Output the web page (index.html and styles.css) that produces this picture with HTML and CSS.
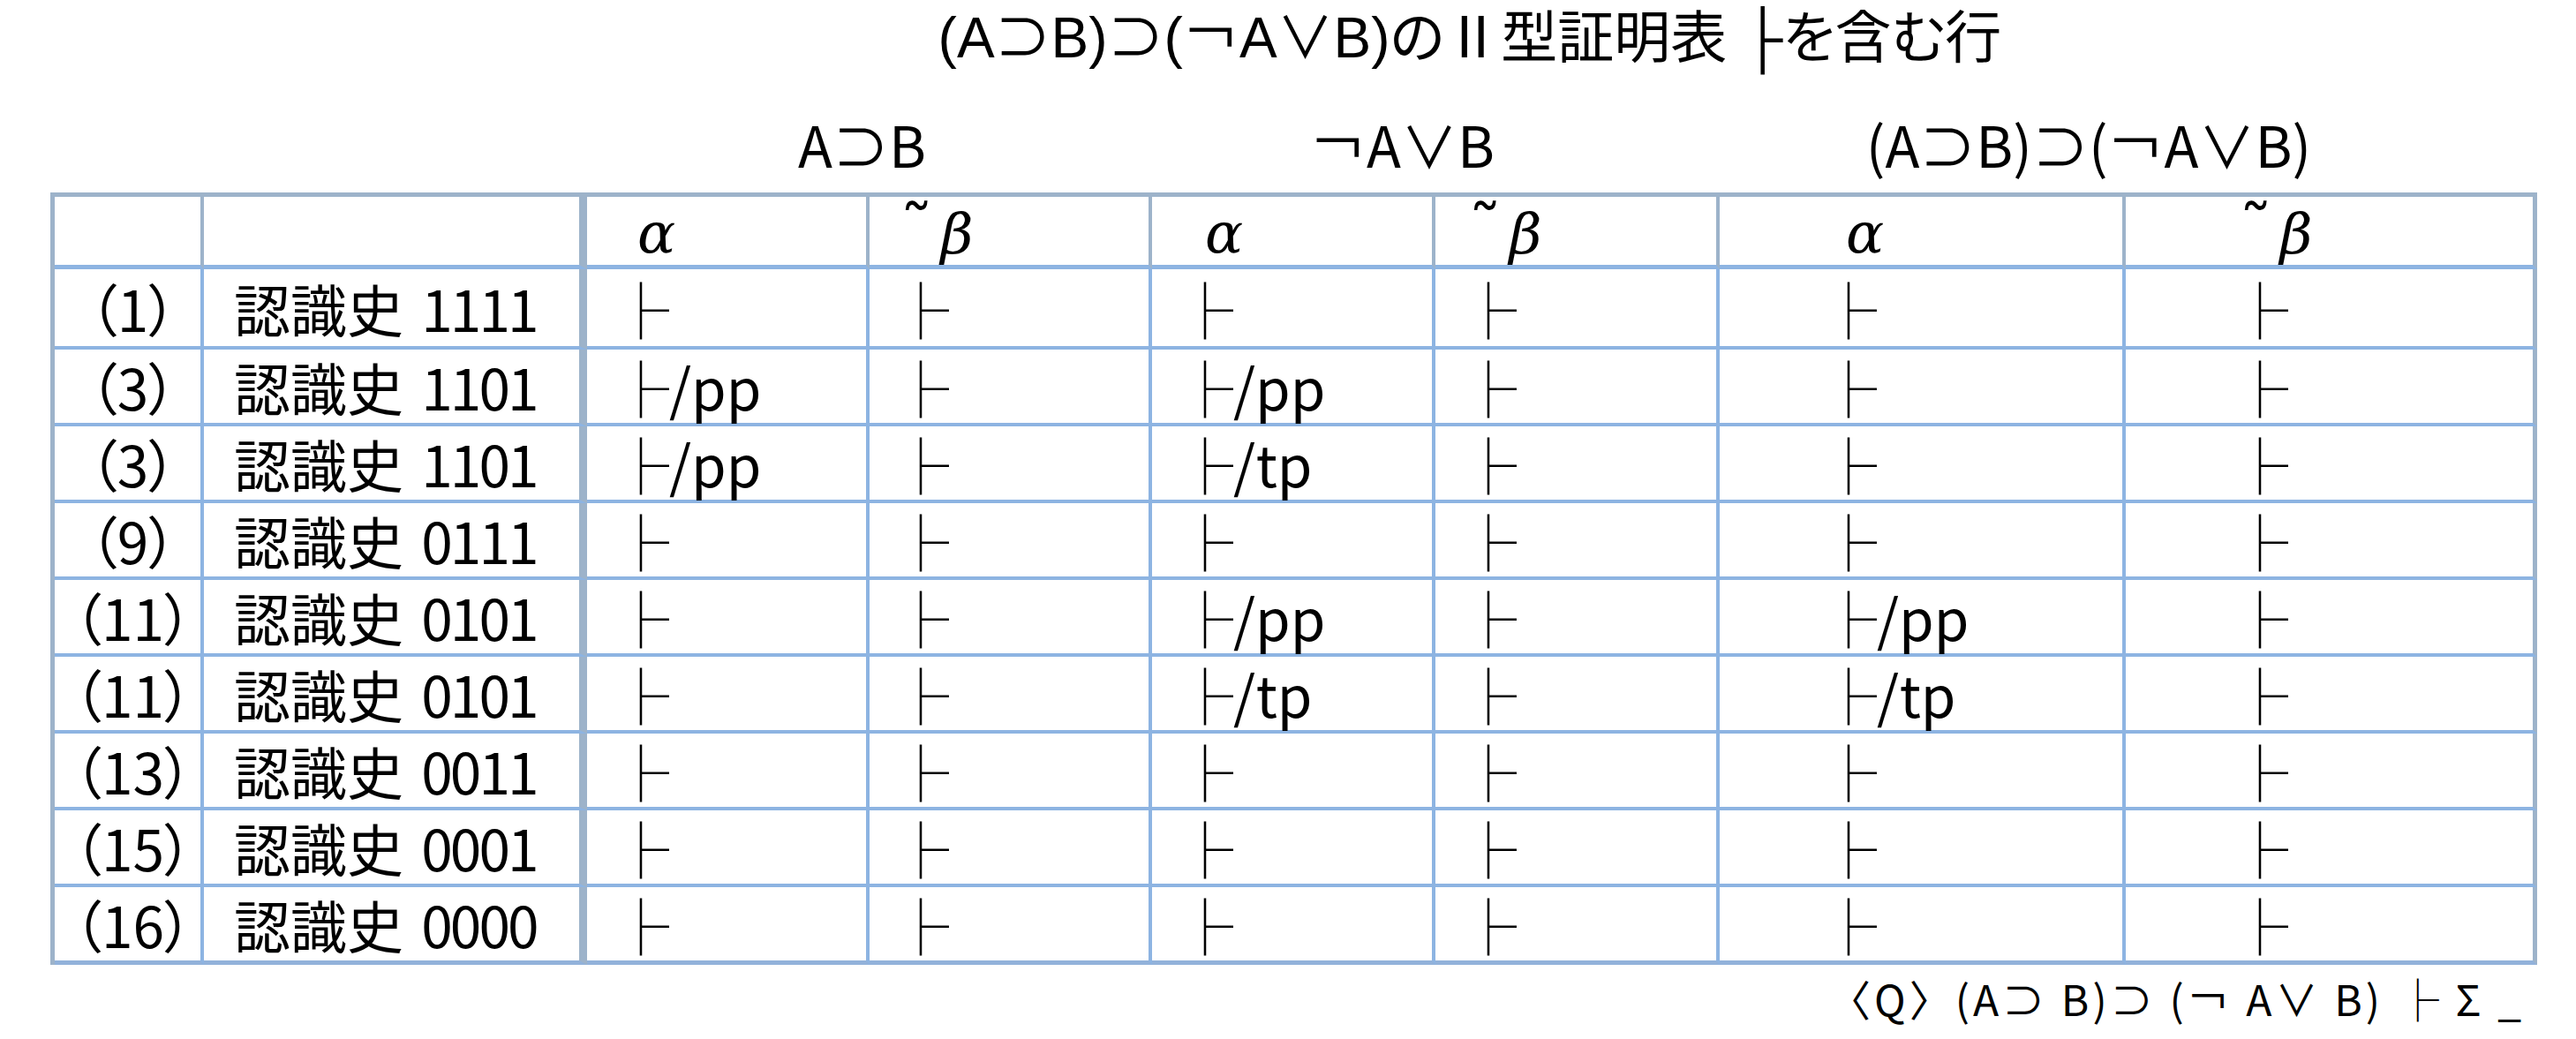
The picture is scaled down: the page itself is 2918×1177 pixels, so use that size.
FILE: index.html
```html
<!DOCTYPE html>
<html lang="ja">
<head>
<meta charset="utf-8">
<title>(A⊃B)⊃(￢A∨B)のⅡ型証明表</title>
<link rel="stylesheet" href="styles.css">
</head>
<body>
<div class="page">
  <h1 class="title">(A⊃B)⊃(￢A∨B)のⅡ型証明表 ├を含む行</h1>
  <div class="groups">
    <div class="group g1">A⊃B</div>
    <div class="group g2">￢A∨B</div>
    <div class="group g3">(A⊃B)⊃(￢A∨B)</div>
  </div>
  <table class="proof">
    <colgroup>
      <col class="w1"><col class="w2"><col class="w3"><col class="w4">
      <col class="w5"><col class="w6"><col class="w7"><col class="w8">
    </colgroup>
    <thead>
      <tr>
        <th class="c1"></th>
        <th class="c2"></th>
        <th class="c3"><span class="greek">α</span></th>
        <th class="c4"><span class="greek"><span class="tilde">˜</span>β</span></th>
        <th class="c5"><span class="greek">α</span></th>
        <th class="c6"><span class="greek"><span class="tilde">˜</span>β</span></th>
        <th class="c7"><span class="greek">α</span></th>
        <th class="c8"><span class="greek"><span class="tilde">˜</span>β</span></th>
      </tr>
    </thead>
    <tbody>
      <tr>
        <td class="c1">（1）</td><td class="c2">認識史 <span class="num">1111</span></td>
        <td class="c3">├</td><td class="c4">├</td><td class="c5">├</td><td class="c6">├</td><td class="c7">├</td><td class="c8">├</td>
      </tr>
      <tr>
        <td class="c1">（3）</td><td class="c2">認識史 <span class="num">1101</span></td>
        <td class="c3">├/pp</td><td class="c4">├</td><td class="c5">├/pp</td><td class="c6">├</td><td class="c7">├</td><td class="c8">├</td>
      </tr>
      <tr>
        <td class="c1">（3）</td><td class="c2">認識史 <span class="num">1101</span></td>
        <td class="c3">├/pp</td><td class="c4">├</td><td class="c5">├/tp</td><td class="c6">├</td><td class="c7">├</td><td class="c8">├</td>
      </tr>
      <tr>
        <td class="c1">（9）</td><td class="c2">認識史 <span class="num">0111</span></td>
        <td class="c3">├</td><td class="c4">├</td><td class="c5">├</td><td class="c6">├</td><td class="c7">├</td><td class="c8">├</td>
      </tr>
      <tr>
        <td class="c1">（11）</td><td class="c2">認識史 <span class="num">0101</span></td>
        <td class="c3">├</td><td class="c4">├</td><td class="c5">├/pp</td><td class="c6">├</td><td class="c7">├/pp</td><td class="c8">├</td>
      </tr>
      <tr>
        <td class="c1">（11）</td><td class="c2">認識史 <span class="num">0101</span></td>
        <td class="c3">├</td><td class="c4">├</td><td class="c5">├/tp</td><td class="c6">├</td><td class="c7">├/tp</td><td class="c8">├</td>
      </tr>
      <tr>
        <td class="c1">（13）</td><td class="c2">認識史 <span class="num">0011</span></td>
        <td class="c3">├</td><td class="c4">├</td><td class="c5">├</td><td class="c6">├</td><td class="c7">├</td><td class="c8">├</td>
      </tr>
      <tr>
        <td class="c1">（15）</td><td class="c2">認識史 <span class="num">0001</span></td>
        <td class="c3">├</td><td class="c4">├</td><td class="c5">├</td><td class="c6">├</td><td class="c7">├</td><td class="c8">├</td>
      </tr>
      <tr>
        <td class="c1">（16）</td><td class="c2">認識史 <span class="num">0000</span></td>
        <td class="c3">├</td><td class="c4">├</td><td class="c5">├</td><td class="c6">├</td><td class="c7">├</td><td class="c8">├</td>
      </tr>
    </tbody>
  </table>
  <p class="footer">〈Q〉(A⊃ B)⊃ (￢ A∨ B) ├ Σ _</p>
</div>
</body>
</html>
```

FILE: styles.css
```css
* { box-sizing: border-box; }

html, body {
  margin: 0;
  padding: 0;
  background: #ffffff;
}

body {
  width: 2918px;
  height: 1177px;
  overflow: hidden;
  color: #000000;
  font-family: "Noto Sans CJK JP", "Noto Sans", sans-serif;
  font-feature-settings: "palt";
}

.page {
  --gray: #9db3ca;
  --blue: #8db4e2;
}

.title {
  margin: 0 0 0 665px;
  width: 2000px;
  height: 80px;
  padding-top: 6px;
  font-family: "Liberation Sans", "Noto Sans CJK JP", sans-serif;
  font-size: 64px;
  line-height: 74px;
  font-weight: 400;
  text-align: center;
  white-space: nowrap;
}

.groups {
  display: flex;
  margin-top: 42px;
  padding-left: 665px;
  height: 80px;
  font-size: 64px;
  line-height: 80px;
  white-space: nowrap;
}

.group { text-align: center; }
.g1 { width: 623px; }
.g2 { width: 601px; }
.g3 { width: 954px; }

.proof {
  margin: 16px 0 0 57px;
  width: 2817px;
  table-layout: fixed;
  border-collapse: separate;
  border-spacing: 0;
  border-left: 5px solid var(--gray);
  border-top: 5px solid var(--gray);
  font-size: 64px;
  line-height: 64px;
}

.w1 { width: 169px; }
.w2 { width: 434px; }
.w3 { width: 320px; }
.w4 { width: 320px; }
.w5 { width: 321px; }
.w6 { width: 322px; }
.w7 { width: 460px; }
.w8 { width: 466px; }

.proof th,
.proof td {
  padding: 0;
  border-right: 4px solid var(--blue);
  border-bottom: 4px solid var(--blue);
  text-align: left;
  vertical-align: middle;
  font-weight: 400;
  white-space: nowrap;
  overflow: visible;
}

.proof thead th {
  height: 73px;
  border-bottom-width: 5px;
  border-right-color: var(--gray);
}

.proof tbody td { height: 87px; }
.proof tbody tr:first-child td { height: 91px; }
.proof tbody tr:last-child td {
  height: 88px;
  border-bottom: 5px solid #92b2da;
}

.proof .c2 { border-right: 9px solid var(--gray); }
.proof .c8 { border-right: 5px solid var(--gray); }

.proof td.c1 { text-align: center; padding-left: 12px; }
.proof td.c2 { padding-left: 34px; }
.proof td.c3 { padding-left: 29px; }
.proof td.c4 { padding-left: 26px; }
.proof td.c5 { padding-left: 28px; }
.proof td.c6 { padding-left: 28px; }
.proof td.c7 { padding-left: 114px; }
.proof td.c8 { padding-left: 120px; }

.proof th.c3 { padding-left: 57px; }
.proof th.c4 { padding-left: 34px; }
.proof th.c5 { padding-left: 60px; }
.proof th.c6 { padding-left: 37px; }
.proof th.c7 { padding-left: 143px; }
.proof th.c8 { padding-left: 128px; }

.greek {
  font-family: "DejaVu Serif", serif;
  font-style: italic;
  font-feature-settings: normal;
}

.tilde {
  display: inline-block;
  margin-right: 8px;
  font-size: 1.2em;
  line-height: 1;
  font-style: normal;
}

.num {
  margin-left: 6px;
  letter-spacing: -3px;
}

.footer {
  margin: 5px 58px 0 0;
  font-size: 48px;
  line-height: 64px;
  letter-spacing: 4px;
  text-align: right;
  white-space: nowrap;
  font-feature-settings: normal;
}
```
